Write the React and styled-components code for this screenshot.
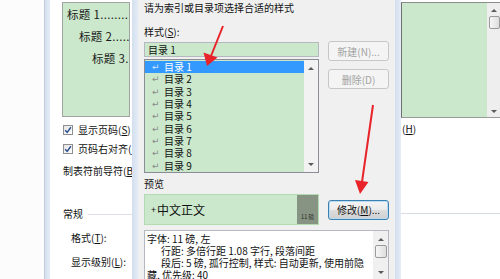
import React from "react";
import styled, { createGlobalStyle } from "styled-components";

const Global = createGlobalStyle`
  html, body {
    margin: 0;
    padding: 0;
    background: #ffffff;
  }
  body {
    font-family: "Noto Sans CJK SC", "Noto Sans", "Liberation Sans", sans-serif;
    font-size: 10px;
    color: #111;
    -webkit-font-smoothing: antialiased;
  }
`;

const tocItems = ["目录 1", "目录 2", "目录 3", "目录 4", "目录 5", "目录 6", "目录 7", "目录 8", "目录 9"];

export default function App() {
  return (
    <>
      <Global />
      <Screen>
        <Desk />
        <Frame $edge />
        <BackLeft>
          <TocPreview>
            <TocLine $indent={0}>标题 1..................</TocLine>
            <TocLine $indent={12}>标题 2..................</TocLine>
            <TocLine $indent={25}>标题 3..................</TocLine>
          </TocPreview>
          <CheckRow $top={7}>
            <CheckBox>
              <svg width="8" height="8" viewBox="0 0 8 8">
                <path d="M1.2 4.2 L3.2 6.4 L6.9 1.3" fill="none" stroke="#2d4f93" strokeWidth="1.5" />
              </svg>
            </CheckBox>
            <span>显示页码(<U>S</U>)</span>
          </CheckRow>
          <CheckRow $top={7}>
            <CheckBox>
              <svg width="8" height="8" viewBox="0 0 8 8">
                <path d="M1.2 4.2 L3.2 6.4 L6.9 1.3" fill="none" stroke="#2d4f93" strokeWidth="1.5" />
              </svg>
            </CheckBox>
            <span>页码右对齐(<U>R</U>)</span>
          </CheckRow>
          <PlainLabel $top={10} $indent={1}>制表符前导符(<U>B</U>):</PlainLabel>
          <GroupHeader>
            <span>常规</span>
            <GroupRule />
          </GroupHeader>
          <PlainLabel $top={12} $indent={9}>格式(<U>T</U>):</PlainLabel>
          <PlainLabel $top={12} $indent={9}>显示级别(<U>L</U>):</PlainLabel>
        </BackLeft>
        <Frame />
        <Dialog>
          <Instruction>请为索引或目录项选择合适的样式</Instruction>
          <FieldLabel $top={12}>样式(<U>S</U>):</FieldLabel>
          <MainRow>
            <LeftCol>
              <StyleInput>目录 1</StyleInput>
              <StyleList>
                <Items>
                  {tocItems.map((t, i) => (
                    <Item key={t} $selected={i === 0}>
                      <Return $selected={i === 0}>↵</Return>
                      <span>{t}</span>
                    </Item>
                  ))}
                </Items>
                <ListScroll>
                  <UpTri />
                  <DownTri />
                </ListScroll>
              </StyleList>
            </LeftCol>
            <ButtonCol>
              <Button disabled>新建(N)...</Button>
              <Button disabled>删除(D)</Button>
            </ButtonCol>
          </MainRow>
          <FieldLabel $top={5}>预览</FieldLabel>
          <PreviewRow>
            <PreviewBox>
              <PreviewText>
                <Plus>+</Plus>中文正文
              </PreviewText>
              <SizeBlock>11 磅</SizeBlock>
            </PreviewBox>
            <Button $default>
              修改(<U>M</U>)...
            </Button>
          </PreviewRow>
          <Description>
            <DescText>
              <DescLine>字体: 11 磅, 左</DescLine>
              <DescLine $indent>行距: 多倍行距 1.08 字行, 段落间距</DescLine>
              <DescLine $indent>段后: 5 磅, 孤行控制, 样式: 自动更新, 使用前隐</DescLine>
              <DescLine>藏, 优先级: 40</DescLine>
            </DescText>
            <DescScroll>
              <UpTri />
              <Thumb />
              <DownTri />
            </DescScroll>
          </Description>
        </Dialog>
        <Frame />
        <BackRight>
          <WebPreview>
            <WebGreen />
            <WebScroll>
              <UpTri />
              <WebThumb />
              <DownTri />
            </WebScroll>
          </WebPreview>
          <RightLabel>
            (<U>H</U>)
          </RightLabel>
          <RightRule />
        </BackRight>
        <Arrows width="500" height="279" viewBox="0 0 500 279">
          <line x1="223" y1="26" x2="211" y2="56" stroke="#e8232a" strokeWidth="2" />
          <polygon points="207,66 203.5,52.5 217.5,57.5" fill="#e8232a" />
          <line x1="373" y1="105" x2="362" y2="182" stroke="#e8232a" strokeWidth="2" />
          <polygon points="360,194 355,180 368.5,182" fill="#e8232a" />
        </Arrows>
      </Screen>
    </>
  );
}

const Screen = styled.div`
  position: relative;
  display: flex;
  width: 500px;
  height: 279px;
  overflow: hidden;
`;

const Desk = styled.div`
  width: 44px;
  flex: none;
  background: #fcfcfc;
`;

const Frame = styled.div`
  flex: none;
  width: 6px;
  box-sizing: border-box;
  background: linear-gradient(90deg, #d3dfee 0%, #dde7f4 60%, #e4ecf7 100%);
  border-left: ${(p) => (p.$edge ? "1px solid #c3ccd7" : "none")};
`;

const U = styled.span`
  text-decoration: underline;
  text-underline-offset: 1px;
`;

/* back window, left part */
const BackLeft = styled.div`
  width: 82px;
  flex: none;
  background: #ffffff;
  padding: 2px 0 0 12px;
  box-sizing: border-box;
  display: flex;
  flex-direction: column;
  overflow: hidden;
`;

const TocPreview = styled.div`
  width: 68px;
  height: 115px;
  flex: none;
  box-sizing: border-box;
  border: 1px solid #a3a3a3;
  background: #cbe8cc;
  padding: 0 0 0 4px;
  overflow: hidden;
`;

const TocLine = styled.div`
  font-size: 11.5px;
  line-height: 22px;
  white-space: nowrap;
  color: #1a1a1a;
  padding-left: ${(p) => p.$indent}px;
  letter-spacing: 0.3px;
`;

const CheckRow = styled.div`
  display: flex;
  align-items: center;
  gap: 5px;
  margin-top: ${(p) => p.$top}px;
  line-height: 12px;
  white-space: nowrap;
  padding-left: 1px;
`;

const CheckBox = styled.div`
  width: 10px;
  height: 10px;
  flex: none;
  box-sizing: border-box;
  border: 1px solid #8f8f8f;
  background: linear-gradient(135deg, #e4e4e4, #ffffff);
  display: flex;
  align-items: center;
  justify-content: center;
`;

const PlainLabel = styled.div`
  margin-top: ${(p) => p.$top}px;
  padding-left: ${(p) => p.$indent}px;
  line-height: 12px;
  white-space: nowrap;
`;

const GroupHeader = styled.div`
  display: flex;
  align-items: center;
  gap: 5px;
  margin-top: 31px;
  line-height: 12px;
  padding-left: 1px;
  white-space: nowrap;
`;

const GroupRule = styled.div`
  flex: 1;
  height: 1px;
  background: #dcdfe3;
`;

/* front dialog */
const Dialog = styled.div`
  width: 257px;
  flex: none;
  box-sizing: border-box;
  background: #f0f0f0;
  padding: 2px 0 0 6px;
  display: flex;
  flex-direction: column;
`;

const Instruction = styled.div`
  line-height: 12px;
  white-space: nowrap;
`;

const FieldLabel = styled.div`
  margin-top: ${(p) => p.$top}px;
  line-height: 12px;
`;

const MainRow = styled.div`
  display: flex;
  gap: 9px;
  margin-top: 3px;
`;

const LeftCol = styled.div`
  width: 175px;
  display: flex;
  flex-direction: column;
  gap: 2px;
  padding-top: 1px;
`;

const StyleInput = styled.div`
  height: 15px;
  box-sizing: border-box;
  border: 1px solid #b5b8bf;
  background: #cbe8cc;
  padding-left: 3px;
  line-height: 13px;
`;

const StyleList = styled.div`
  height: 114px;
  box-sizing: border-box;
  border: 1px solid #8a8d94;
  display: flex;
  background: #cbe8cc;
`;

const Items = styled.div`
  flex: 1;
  padding-top: 1px;
  display: flex;
  flex-direction: column;
`;

const Item = styled.div`
  height: 12.4px;
  display: flex;
  align-items: center;
  gap: 2px;
  padding-left: 7px;
  line-height: 12px;
  background: ${(p) => (p.$selected ? "#3399ff" : "transparent")};
  color: ${(p) => (p.$selected ? "#ffffff" : "#111")};
`;

const Return = styled.span`
  font-family: "DejaVu Sans", sans-serif;
  font-size: 9px;
  width: 10px;
  color: ${(p) => (p.$selected ? "#cfe5ff" : "#8a8a8a")};
`;

const ScrollBase = styled.div`
  flex: none;
  width: 14px;
  background: #eeeeee;
  display: flex;
  flex-direction: column;
  align-items: center;
  justify-content: space-between;
  box-sizing: border-box;
  padding: 6px 0;
`;

const ListScroll = styled(ScrollBase)`
  background: #f2f2f2;
  padding: 7px 0 6px;
`;

const UpTri = styled.div`
  width: 0;
  height: 0;
  border-left: 3px solid transparent;
  border-right: 3px solid transparent;
  border-bottom: 3px solid #5a5a5a;
`;

const DownTri = styled.div`
  width: 0;
  height: 0;
  border-left: 3px solid transparent;
  border-right: 3px solid transparent;
  border-top: 3px solid #5a5a5a;
`;

const ButtonCol = styled.div`
  display: flex;
  flex-direction: column;
  gap: 8px;
`;

const Button = styled.div`
  width: 61px;
  height: 20px;
  box-sizing: border-box;
  border-radius: 3px;
  display: flex;
  align-items: center;
  justify-content: center;
  white-space: nowrap;
  border: 1px solid ${(p) => (p.$default ? "#3c7fb1" : "#c7c7c7")};
  background: ${(p) =>
    p.disabled
      ? "#f4f4f4"
      : "linear-gradient(180deg, #f4f4f4 0%, #ebebeb 50%, #dddddd 51%, #cfcfcf 100%)"};
  color: ${(p) => (p.disabled ? "#a3a3a3" : "#111")};
  box-shadow: ${(p) => (p.$default ? "inset 0 0 0 1px #b9dcf2" : "none")};
`;

const PreviewRow = styled.div`
  display: flex;
  align-items: center;
  gap: 9px;
  margin-top: 4px;
`;

const PreviewBox = styled.div`
  width: 175px;
  height: 31px;
  box-sizing: border-box;
  border: 1px solid #b2dbb2;
  background: #cbe8cc;
  display: flex;
`;

const PreviewText = styled.div`
  flex: 1;
  display: flex;
  align-items: center;
  padding-left: 6px;
  font-size: 12px;
  color: #111;
`;

const Plus = styled.span`
  font-size: 9px;
  margin-right: 1px;
`;

const SizeBlock = styled.div`
  width: 21px;
  background: #879483;
  color: #1e1e1e;
  font-size: 5.5px;
  display: flex;
  align-items: flex-end;
  justify-content: center;
  padding-bottom: 3px;
  box-sizing: border-box;
  white-space: nowrap;
`;

const Description = styled.div`
  margin-top: 5px;
  width: 245px;
  height: 70px;
  flex: none;
  box-sizing: border-box;
  border: 1px solid #b5b8bf;
  background: #ffffff;
  display: flex;
`;

const DescText = styled.div`
  flex: 1;
  padding: 2px 0 0 2px;
  overflow: hidden;
`;

const DescLine = styled.div`
  line-height: 12px;
  white-space: nowrap;
  padding-left: ${(p) => (p.$indent ? 14 : 0)}px;
`;

const DescScroll = styled(ScrollBase)`
  width: 15px;
  justify-content: flex-start;
  background: #f0f0f0;
  padding: 7px 0 0;
  & > div:last-child {
    margin-top: 13px;
  }
`;

const Thumb = styled.div`
  margin-top: 4px;
  width: 12px;
  height: 13px;
  box-sizing: border-box;
  border: 1px solid #9a9a9a;
  border-radius: 2px;
  background: linear-gradient(90deg, #f6f6f6, #dedede);
`;

/* back window, right part */
const BackRight = styled.div`
  width: 100px;
  flex: none;
  background: #ffffff;
  padding-top: 2px;
  display: flex;
  flex-direction: column;
`;

const WebPreview = styled.div`
  height: 116px;
  flex: none;
  display: flex;
  box-sizing: border-box;
  border-top: 1px solid #8c8c8c;
  border-left: 1px solid #707070;
  border-bottom: 1px solid #9a9a9a;
`;

const WebGreen = styled.div`
  width: 85px;
  background: #cbe8cc;
`;

const WebScroll = styled(ScrollBase)`
  flex: 1;
  justify-content: flex-start;
  padding: 6px 0 4px;
  & > div:last-child {
    margin-top: auto;
  }
`;

const WebThumb = styled(Thumb)`
  width: 11px;
  margin-top: 4px;
`;

const RightLabel = styled.div`
  margin-top: 5px;
  line-height: 12px;
  padding-left: 1px;
`;

const RightRule = styled.div`
  margin-top: 78px;
  height: 1px;
  background: #d7dde5;
`;

const Arrows = styled.svg`
  position: absolute;
  left: 0;
  top: 0;
  pointer-events: none;
`;
